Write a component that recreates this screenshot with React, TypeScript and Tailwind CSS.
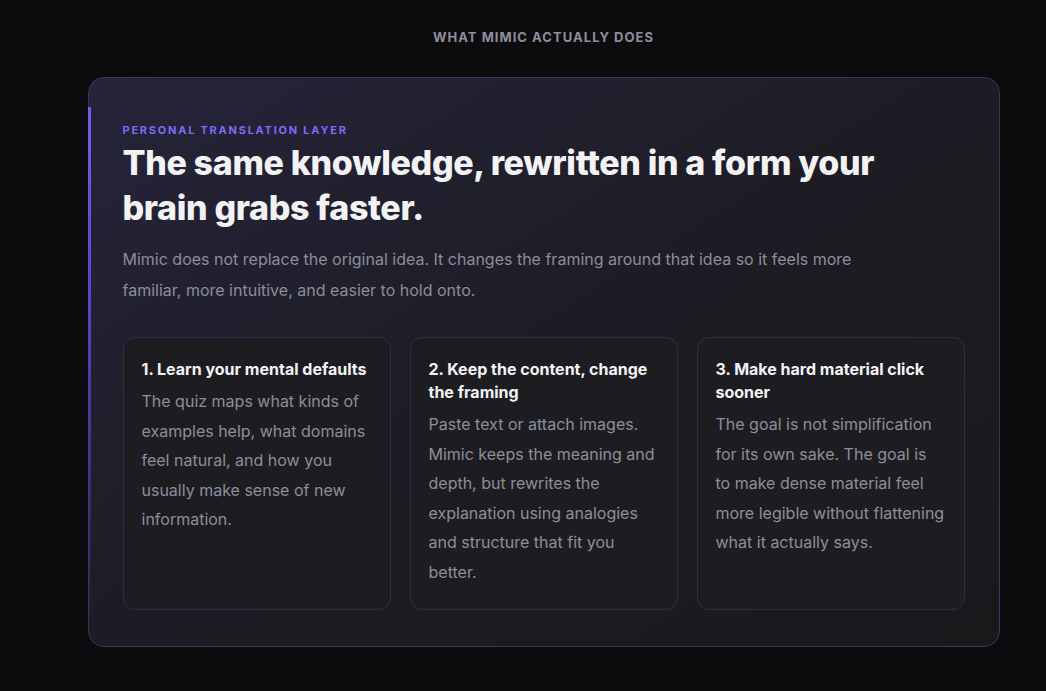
const steps = [
  {
    title: "1. Learn your mental defaults",
    body: "The quiz maps what kinds of examples help, what domains feel natural, and how you usually make sense of new information.",
  },
  {
    title: "2. Keep the content, change the framing",
    body: "Paste text or attach images. Mimic keeps the meaning and depth, but rewrites the explanation using analogies and structure that fit you better.",
  },
  {
    title: "3. Make hard material click sooner",
    body: "The goal is not simplification for its own sake. The goal is to make dense material feel more legible without flattening what it actually says.",
  },
];

export default function App() {
  return (
    <div className="min-h-[691px] bg-[#0c0c0f] font-[Inter] flex flex-col items-center pt-[29px] pl-[41px]">
      <h2 className="text-[13px] font-bold tracking-[0.08em] text-[#8f8f9c] leading-4">
        WHAT MIMIC ACTUALLY DOES
      </h2>
      <section className="relative mt-[32px] w-[912px] rounded-2xl border border-[#3a3463] bg-gradient-to-br from-[#26243a] via-[#1d1c24] to-[#19191c] pl-[34px] pr-[34px] pt-[44px] pb-[36px]">
        <div className="absolute left-[-1px] top-[29px] bottom-[24px] w-[3px] bg-gradient-to-b from-[#6f5ff2] via-[#4b3fb0] to-transparent" />
        <p className="text-[11px] font-bold tracking-[0.16em] text-[#7b6cf6] leading-4">
          PERSONAL TRANSLATION LAYER
        </p>
        <h1 className="mt-[2px] max-w-[760px] text-[34px] font-extrabold leading-[45px] tracking-[-0.01em] text-[#f3f3f6]">
          The same knowledge, rewritten in a form your brain grabs faster.
        </h1>
        <p className="mt-[14px] max-w-[780px] text-[16px] leading-[31px] text-[#8d8d99]">
          Mimic does not replace the original idea. It changes the framing around that idea so it feels more familiar, more intuitive, and easier to hold onto.
        </p>
        <div className="mt-[31px] grid grid-cols-3 gap-[19px]">
          {steps.map((s) => (
            <div
              key={s.title}
              className="h-[273px] rounded-xl border border-[#2f2c47] bg-[#1d1d21] px-[18px] pt-[20px]"
            >
              <h3 className="text-[16px] font-bold leading-[23px] text-[#f3f3f6]">{s.title}</h3>
              <p className="mt-[6px] text-[16px] leading-[29.5px] text-[#8d8d99]">{s.body}</p>
            </div>
          ))}
        </div>
      </section>
    </div>
  );
}
